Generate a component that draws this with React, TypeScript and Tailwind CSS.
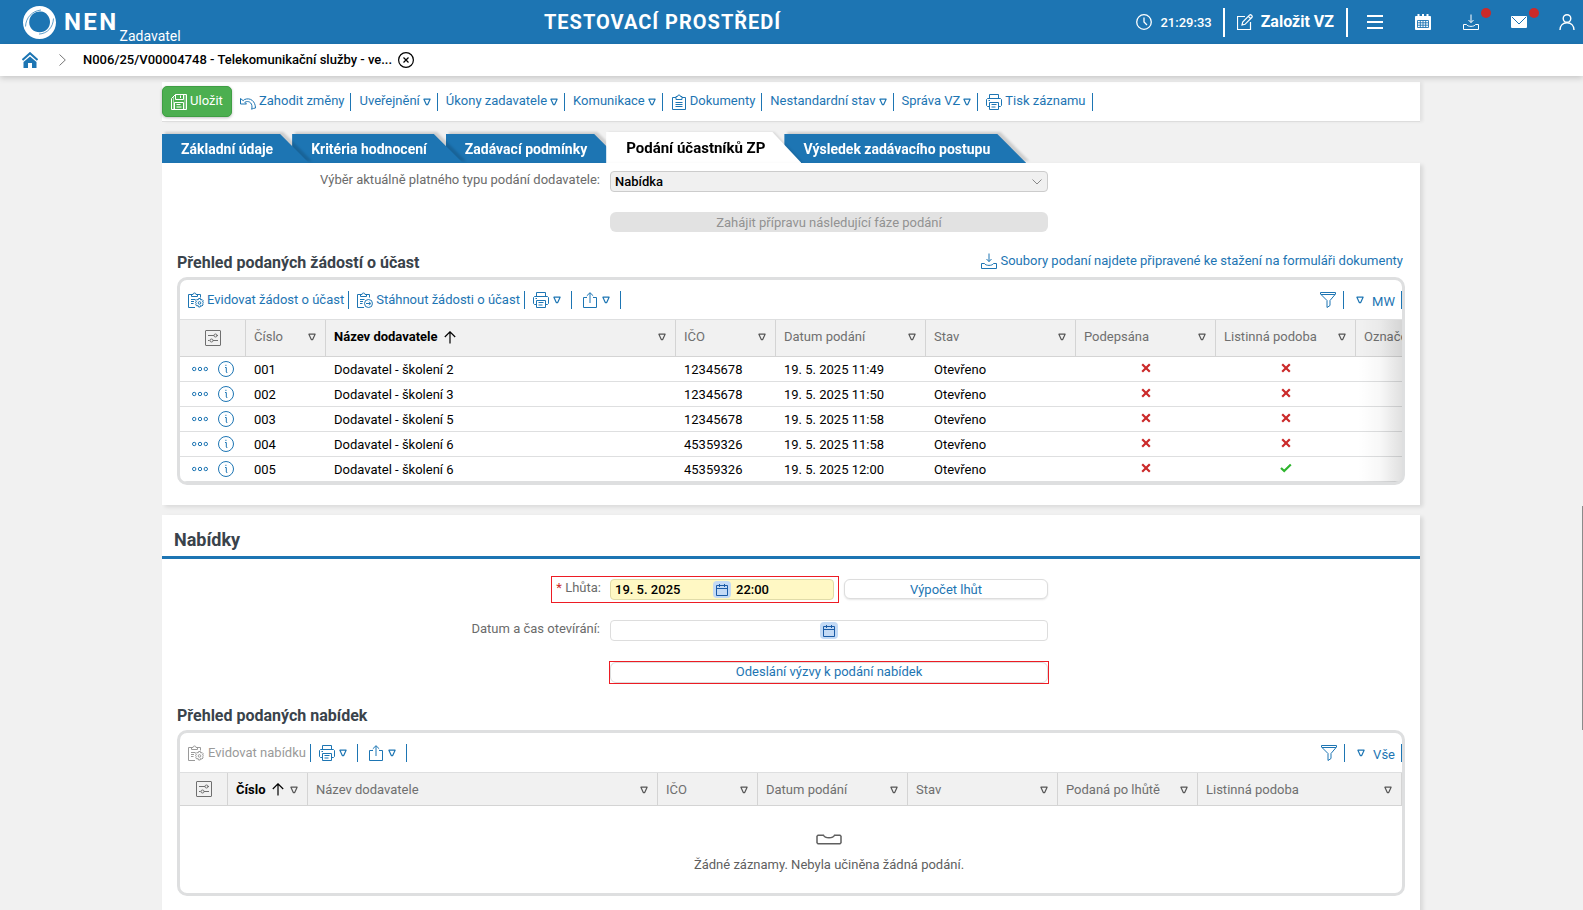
import { useState } from 'react'
import type { ReactNode } from 'react'

/* ================= ICONS ================= */

interface IconProps {
  children: ReactNode
  className?: string
  width?: number
}

const Icon = ({ children, className = '', width = 1 }: IconProps) => (
  <svg
    viewBox="0 0 16 16"
    fill="none"
    stroke="currentColor"
    strokeWidth={width}
    className={`w-4 h-4 shrink-0 ${className}`}
    aria-hidden="true"
  >
    {children}
  </svg>
)

const Triangle = ({ className = '' }: { className?: string }) => (
  <svg viewBox="0 0 8 8" fill="none" stroke="currentColor" strokeWidth="1.2" className={`w-2 h-2 shrink-0 ${className}`} aria-hidden="true">
    <path d="M.9 1.2h6.2L4.7 6.6H3.3z" strokeLinejoin="round" />
  </svg>
)

const SaveIcon = () => (
  <Icon>
    <path d="M4.5.5h11v15H.5v-11zM4.5.5v5h8v-5M9.5 1.5v2.5M3.5 15.5v-7h9v7M5.5 10.5h4M5.5 13h5" />
    <path d="M2.5 3v12.500M14 1v14.500" strokeOpacity=".5" />
  </Icon>
)

const UndoIcon = () => (
  <Icon className="mt-1">
    <path d="M.5 2.500v5.500h6L4.800 6.300c3.700-2 7.200.2 7.200 4.700 0 .8-.2 1.500-.5 2.200 1.600-.6 2.700-1.200 4-1.200C15.400 5.500 10.500 1 4.300 3.600L3.200 4.700.5 2.500z" strokeLinejoin="round" />
  </Icon>
)

const ClipboardIcon = () => (
  <Icon>
    <path d="M5 3.500H1.500v12h13v-12H11M5 5.500v-3h1.500a1.500 1.500 0 0 1 3 0H11v3zM4.500 8.500h7M4.500 10.500h7M4.500 12.500h7" />
  </Icon>
)

const ClipboardGearIcon = () => (
  <Icon>
    <path d="M4 2.500H.5v13h6.500M9 2.500h3.500v3M3.500 4.500v-2h1.500a1.500 1.500 0 0 1 3 0H9.500v2zM3 7.500h4.500M3 9.500h3M3 11.500h2.500" />
    <path d="M10.600 6.500h1.800l.4 1.500 1.300-.5 1.200 1.300-.8 1.200 1 .8-1 .9.600 1.200-1.200 1.200-1.300-.6-.4 1.500h-1.700l-.4-1.500-1.300.5-1.100-1.200.7-1.200-1-.9 1-.8-.7-1.200 1.200-1.300 1.200.6z" />
    <circle cx="11.500" cy="10.900" r="1.300" />
  </Icon>
)

const ClipboardArrowIcon = () => (
  <Icon>
    <path d="M4 2.500H.5v13h6.500M9 2.500h3.500v3M3.500 4.500v-2h1.500a1.500 1.500 0 0 1 3 0H9.500v2zM3 7.500h4.500M3 9.500h3M3 11.500h2.500" />
    <circle cx="11.500" cy="11.500" r="4" />
    <path d="M9 11.500h4.500M12 9.700l1.700 1.800-1.700 1.800" />
  </Icon>
)

const PrinterIcon = () => (
  <Icon>
    <path d="M3.500 4.500v-4h9v4M3.500 12.500h-2l-1-1v-6l1-1h13l1 1v6l-1 1h-2M3.500 8.500h9v7h-9zM5.500 10.500h5M5.500 13h4M2.500 6.500h1.500" />
  </Icon>
)

const ShareIcon = () => (
  <Icon>
    <path d="M5 5.500H1.500v10h13v-10H11M8 11V.9M4.800 3.800L8 .7l3.200 3.100" />
  </Icon>
)

const FunnelIcon = () => (
  <Icon>
    <path d="M.5.500h15v1.500l-5.500 6.500v5l-3 2v-7L.5 2zM1 2.500h14" />
  </Icon>
)

const DownloadIcon = () => (
  <Icon>
    <path d="M8 .5v8M5.500 6L8 8.600 10.500 6M3.500 10.500H.500v5h15v-5h-3c-1 2.500-8 2.500-9 0z" strokeLinejoin="round" />
  </Icon>
)

const SettingsIcon = () => (
  <Icon>
    <rect x=".5" y=".5" width="15" height="15" rx=".5" />
    <path d="M3 5.500h6M11.500 5.500H13M3 10.500h1.500M8 10.500h5" />
    <circle cx="10.500" cy="5.500" r="1.500" />
    <circle cx="6.500" cy="10.500" r="1.500" />
  </Icon>
)

const ArrowUpIcon = () => (
  <svg viewBox="0 0 12 13" fill="none" stroke="currentColor" strokeWidth="1.2" className="w-3 h-[13px] shrink-0" aria-hidden="true">
    <path d="M6 12.500V.800M.8 6L6 .800 11.200 6" />
  </svg>
)

const CalendarIcon = () => (
  <svg viewBox="0 0 12 12" fill="none" stroke="currentColor" className="w-3 h-3" aria-hidden="true">
    <path d="M.5 1.500h11v10H.5zM.5 4.500h11M3.500 0v3M8.500 0v3" />
  </svg>
)

const No = () => (
  <svg viewBox="0 0 10 10" stroke="#cb2a2a" strokeWidth="2.200" className="w-2.5 h-2.5 mx-auto -mt-1" role="img" aria-label="Ne">
    <path d="M1.200 1.200l7.600 7.600M8.800 1.200L1.200 8.800" />
  </svg>
)

const Yes = () => (
  <svg viewBox="0 0 12 10" fill="none" stroke="#2fb52f" strokeWidth="2.200" className="w-3 h-2.5 mx-auto -mt-1" role="img" aria-label="Ano">
    <path d="M1 5l3.200 3L10.800 1.500" />
  </svg>
)

/* ================= DATA ================= */

const menu = [
  { label: 'Uveřejnění', arrow: true },
  { label: 'Úkony zadavatele', arrow: true },
  { label: 'Komunikace', arrow: true },
  { label: 'Dokumenty', icon: <ClipboardIcon /> },
  { label: 'Nestandardní stav', arrow: true },
  { label: 'Správa VZ', arrow: true },
  { label: 'Tisk záznamu', icon: <PrinterIcon /> },
]

const tabs = [
  'Základní údaje',
  'Kritéria hodnocení',
  'Zadávací podmínky',
  'Podání účastníků ZP',
  'Výsledek zadávacího postupu',
]

const requests = [
  { no: '001', name: 'Dodavatel - školení 2', ico: '12345678', date: '19. 5. 2025 11:49', paper: false },
  { no: '002', name: 'Dodavatel - školení 3', ico: '12345678', date: '19. 5. 2025 11:50', paper: false },
  { no: '003', name: 'Dodavatel - školení 5', ico: '12345678', date: '19. 5. 2025 11:58', paper: false },
  { no: '004', name: 'Dodavatel - školení 6', ico: '45359326', date: '19. 5. 2025 11:58', paper: false },
  { no: '005', name: 'Dodavatel - školení 6', ico: '45359326', date: '19. 5. 2025 12:00', paper: true },
]

/* ================= SHARED PARTS ================= */

const Separator = () => <span className="w-px h-[18px] bg-[#1d75b3] shrink-0" />

const ColumnHead = ({ label, sorted }: { label: string; sorted?: boolean }) => (
  <th
    scope="col"
    className={`pl-2 pr-[9px] border-r border-b border-[#d4d4d4] text-left overflow-hidden ${
      sorted ? 'font-bold text-black' : 'font-normal text-[#6f6f6f]'
    }`}
  >
    <span className="flex items-center gap-1.5 whitespace-nowrap">
      {label}
      {sorted && <ArrowUpIcon />}
      <Triangle className="ml-auto text-[#555]" />
    </span>
  </th>
)

const SettingsHead = () => (
  <th scope="col" className="border-r border-b border-[#d4d4d4] text-[#6f6f6f]">
    <button aria-label="Nastavení sloupců" className="flex mx-auto"><SettingsIcon /></button>
  </th>
)

const GridToolbar = ({ children, view }: { children: ReactNode; view: string }) => (
  <div className="h-[39px] pl-2 flex items-center text-[#1d75b3]">
    {children}
    <Separator />
    <button aria-label="Tisk" className="flex items-center gap-1 pl-2 pr-2.5"><PrinterIcon /><Triangle /></button>
    <Separator />
    <button aria-label="Export" className="flex items-center gap-1 pl-2.5 pr-2.5"><ShareIcon /><Triangle /></button>
    <Separator />
    <button aria-label="Filtr" className="ml-auto mr-[7px]"><FunnelIcon /></button>
    <Separator />
    <button className="flex items-center gap-2 pl-3 pr-1.5">
      <Triangle />
      <span className="pt-1">{view}</span>
    </button>
    <Separator />
  </div>
)

const FormRow = ({ label, htmlFor, children }: { label?: string; htmlFor?: string; children: ReactNode }) => (
  <div className="flex items-start">
    <div className="w-[438px] mr-[10px] text-right leading-[17px] text-[#6b6b6b]">
      {label && <label htmlFor={htmlFor}>{label}</label>}
    </div>
    <div className="w-[438px]">{children}</div>
  </div>
)

/* ================= HEADER ================= */

function Header() {
  return (
    <header className="h-11 bg-[#1d75b3] text-white flex items-center justify-between pl-[23px]">
      <a href="#" className="flex items-center h-full">
        <svg viewBox="0 0 33 33" className="w-[33px] h-[33px] mr-2" aria-hidden="true">
          <path
            fill="#fff"
            fillRule="evenodd"
            d="M16.500 0C25.600 0 33 7.400 33 16.500S25.600 33 16.500 33 0 25.600 0 16.500 7.400 0 16.500 0zM18 5.500A10.600 10.600 0 0 0 6.200 16.500c0 5.500 4.600 9.800 10.400 9.800 6.200 0 10.400-4.600 10.400-10.200S23.200 6 18 5.500z"
          />
          <path d="M2.500 20.500C3 11.500 9 5 18 4M30.500 12.500c-.5 9-6 15-14.500 15.600" fill="none" stroke="#1d75b3" strokeWidth=".7" />
        </svg>
        <span className="text-[24px] font-bold tracking-widest">NEN</span>
        <span className="text-[14px] self-end ml-px">Zadavatel</span>
      </a>

      <div className="pl-2 text-[20px] font-bold tracking-wider">TESTOVACÍ PROSTŘEDÍ</div>

      <div className="flex items-center">
        <Icon className="mr-2" width={1.3}>
          <circle cx="8" cy="8" r="7.300" />
          <path d="M8 3.500V8l3 3" />
        </Icon>
        <time className="mr-[11px] pt-0.5 font-medium">21:29:33</time>
        <span className="w-0.5 h-[29px] bg-white" />
        <button className="flex items-center gap-2 px-3 text-[16px] font-bold">
          <Icon width={1.2}>
            <path d="M8 2.500H.500v13h13V8M5 11l.700-3L12.500 1.200c1.300-1.300 3.600 1 2.300 2.300L8 10.300zM11.500 2.500l2 2" />
          </Icon>
          Založit VZ
        </button>
        <span className="w-0.5 h-[29px] bg-white" />
        <div className="flex items-center gap-8 pl-[19px] pr-2">
          <button aria-label="Menu">
            <Icon width={2} className="block"><path d="M0 2h16M0 8h16M0 14h16" /></Icon>
          </button>
          <button aria-label="Kalendář">
            <Icon className="block">
              <path d="M.5 2.500h15v13H.5z" fill="currentColor" />
              <path d="M3.500 0v3M8 0v3M12.500 0v3" strokeWidth="2" />
              <path d="M2.500 6.500h11v7h-11zM2.500 8.800h11M2.500 11.200h11M5.300 6.500v7M8 6.500v7M10.700 6.500v7" stroke="#1d75b3" strokeWidth=".9" />
            </Icon>
          </button>
          <button aria-label="Ke stažení" className="relative">
            <DownloadIcon />
            <span className="absolute -top-1.5 -right-3 w-2.5 h-2.5 rounded-full bg-[#cb2a2a]" />
          </button>
          <button aria-label="Zprávy" className="relative">
            <Icon className="block">
              <rect x="0" y="2" width="16" height="12" rx="1" fill="currentColor" stroke="none" />
              <path d="M1 3l7 7 7-7" stroke="#1d75b3" />
            </Icon>
            <span className="absolute -top-1.5 -right-3 w-2.5 h-2.5 rounded-full bg-[#cb2a2a]" />
          </button>
          <button aria-label="Uživatel">
            <Icon width={1.4} className="block">
              <circle cx="8" cy="4.500" r="3.800" />
              <path d="M1 16c0-4.500 3-7.300 7-7.300s7 2.800 7 7.300" />
            </Icon>
          </button>
        </div>
      </div>
    </header>
  )
}

/* ================= PAGE ================= */

export default function App() {
  const [active, setActive] = useState(3)

  return (
    <div className="relative min-h-screen bg-[#f1f1f1] font-[Roboto,sans-serif] text-[13px] leading-4 text-black">
      <Header />

      {/* BREADCRUMB */}
      <nav className="relative z-10 h-8 bg-white shadow-[0_2px_6px_rgba(0,0,0,0.18)] flex items-center pl-[22px]">
        <a href="#" aria-label="Domů" className="text-[#1d75b3] mr-[21px]">
          <Icon>
            <path d="M.5 8L8 1.200 15.500 8" strokeWidth="2" />
            <path d="M8 4.500L14.500 10v6H10v-5H6v5H1.500v-6z" fill="currentColor" stroke="none" />
          </Icon>
        </a>
        <svg viewBox="0 0 7 12" fill="none" stroke="#777" className="w-[7px] h-3 mr-[17px]" aria-hidden="true">
          <path d="M.5.500L6.300 6 .5 11.500" />
        </svg>
        <span className="font-medium">N006/25/V00004748 - Telekomunikační služby - ve...</span>
        <button aria-label="Zavřít" className="ml-1.5">
          <Icon width={1.2}>
            <circle cx="8" cy="8" r="7.400" />
            <path d="M5.500 5.500l5 5M10.500 5.500l-5 5" />
          </Icon>
        </button>
      </nav>

      <main className="pl-[162px] pr-[163px] pt-1.5">
        {/* RECORD ACTIONS */}
        <div className="h-10 bg-white border-b border-[#ddd] shadow-[3px_0_3px_rgba(0,0,0,0.06)] flex items-center text-[#1d75b3]">
          <button className="h-[31px] w-[70px] flex items-center justify-center gap-[3px] rounded-[5px] border border-[#3f9e44] bg-[#4caf50] text-white shadow-[0_1px_3px_rgba(0,0,0,0.25)]">
            <SaveIcon />
            <span className="pb-0.5">Uložit</span>
          </button>
          <button className="flex items-center gap-[3px] pl-2 pr-1.5">
            <UndoIcon />
            <span className="pb-0.5">Zahodit změny</span>
          </button>
          <Separator />
          {menu.map((item) => (
            <div key={item.label} className="flex items-center">
              <button className="flex items-center gap-[3px] pl-2 pr-1.5">
                {item.icon}
                <span className="pb-0.5">{item.label}</span>
                {item.arrow && <Triangle />}
              </button>
              <Separator />
            </div>
          ))}
        </div>

        {/* TABS */}
        <div role="tablist" className="flex items-end h-[41px]">
          {tabs.map((tab, i) => (
            <div
              key={tab}
              className={`-mr-[17px] ${
                active === i
                  ? 'drop-shadow-[2px_0_1px_rgba(0,0,0,0.1)]'
                  : 'drop-shadow-[3px_-2px_1px_rgba(0,0,0,0.15)]'
              }`}
              style={{ zIndex: active === i ? 10 : tabs.length - i }}
            >
              <button
                role="tab"
                aria-selected={active === i}
                onClick={() => setActive(i)}
                className={`block pr-9 font-bold [clip-path:polygon(0_0,calc(100%-29px)_0,100%_100%,0_100%)] ${
                  active === i ? 'h-[31px] pl-5 bg-white text-black text-[15px]' : 'h-[29px] pl-[19px] bg-[#1d75b3] text-white text-[14px]'
                }`}
              >
                {tab}
              </button>
            </div>
          ))}
        </div>

        {/* REQUESTS */}
        <section className="relative z-10 bg-white shadow-[3px_2px_4px_rgba(0,0,0,0.1)] px-[15px] pt-2 pb-5">
          <div className="-ml-[15px] flex flex-col gap-5">
            <FormRow label="Výběr aktuálně platného typu podání dodavatele:" htmlFor="submission-type">
              <div className="relative">
                <select id="submission-type" className="block w-full h-[21px] appearance-none rounded-[4px] border border-[#ccc] bg-[#f0f0f0] px-1 font-medium">
                  <option>Nabídka</option>
                </select>
                <svg viewBox="0 0 10 6" fill="none" stroke="#888" className="absolute right-1.5 top-2 w-2.5 h-1.5" aria-hidden="true">
                  <path d="M.5.500L5 5 9.500.500" />
                </svg>
              </div>
            </FormRow>
            <FormRow>
              <button disabled className="block w-full h-5 pt-0.5 rounded-md bg-[#e2e2e2] text-[#929292]">
                Zahájit přípravu následující fáze podání
              </button>
            </FormRow>
          </div>

          <div className="mt-5 mb-1 flex justify-between items-start">
            <h2 className="pt-px text-[16px] leading-5 font-bold text-[#3a434b]">Přehled podaných žádostí o účast</h2>
            <a href="#" className="flex items-center gap-[3px] h-[18px] mr-0.5 text-[#1d75b3]"><DownloadIcon />Soubory podaní najdete připravené ke stažení na formuláři dokumenty</a>
          </div>

          <div className="relative overflow-hidden rounded-[10px] border-[3px] border-[#dedfe0]">
            <GridToolbar view="MW">
              <button className="flex items-center gap-[3px] pr-1"><ClipboardGearIcon />Evidovat žádost o účast</button>
              <Separator />
              <button className="flex items-center gap-[3px] pl-2 pr-1"><ClipboardArrowIcon />Stáhnout žádosti o účast</button>
            </GridToolbar>
            <div className="overflow-hidden border-t border-[#dedfe0]">
              <table className="table-fixed w-[1316px] border-separate border-spacing-0">
                <colgroup>
                  <col className="w-[66px]" />
                  <col className="w-20" />
                  <col className="w-[350px]" />
                  <col className="w-[100px]" />
                  <col className="w-[150px]" />
                  <col className="w-[150px]" />
                  <col className="w-[140px]" />
                  <col className="w-[140px]" />
                  <col className="w-[140px]" />
                </colgroup>
                <thead className="[&_th>span]:pb-0.5">
                  <tr className="h-[37px] bg-[#f1f1f1]">
                    <SettingsHead />
                    <ColumnHead label="Číslo" />
                    <ColumnHead label="Název dodavatele" sorted />
                    <ColumnHead label="IČO" />
                    <ColumnHead label="Datum podání" />
                    <ColumnHead label="Stav" />
                    <ColumnHead label="Podepsána" />
                    <ColumnHead label="Listinná podoba" />
                    <ColumnHead label="Označení" />
                  </tr>
                </thead>
                <tbody className="[&_td]:border-b [&_td]:border-[#dedfe0] [&_td]:px-2 [&_td]:pb-0 [&_td]:pt-0.5">
                  {requests.map((row) => (
                    <tr key={row.no} className="h-[25px]">
                      <td>
                        <span className="flex items-center gap-2.5 pl-1 pb-0.5 text-[#1d75b3]">
                          <button aria-label="Akce">
                            <Icon className="block">
                              <circle cx="2.200" cy="8" r="1.700" />
                              <circle cx="8" cy="8" r="1.700" />
                              <circle cx="13.800" cy="8" r="1.700" />
                            </Icon>
                          </button>
                          <button aria-label="Detail">
                            <Icon className="block">
                              <circle cx="8" cy="8" r="7.500" />
                              <path d="M7 6.500h1.300v4.500c0 .5.300.700 1 .5M7.300 4.300h1.200" />
                            </Icon>
                          </button>
                        </span>
                      </td>
                      <td>{row.no}</td>
                      <td>{row.name}</td>
                      <td>{row.ico}</td>
                      <td>{row.date}</td>
                      <td>Otevřeno</td>
                      <td><No /></td>
                      <td>{row.paper ? <Yes /> : <No />}</td>
                      <td />
                    </tr>
                  ))}
                </tbody>
              </table>
            </div>
            <div className="absolute right-0 top-10 bottom-0 w-11 pointer-events-none bg-gradient-to-r from-transparent via-black/[0.03] to-black/[0.12]" />
          </div>
        </section>

        {/* OFFERS */}
        <section className="mt-2.5 bg-white shadow-[3px_2px_4px_rgba(0,0,0,0.1)] pb-5">
          <h1 className="px-3 pt-[13px] pb-1 text-[18px] leading-6 font-bold text-[#3a434b] border-b-[3px] border-[#1d75b3]">Nabídky</h1>

          <div className="flex flex-col pt-[17px] gap-[17px]">
            <div className="flex items-start">
              <div className="ml-[389px] h-[27px] border border-[#ed1c24] flex items-start pt-0.5 pr-1">
                <label htmlFor="deadline-date" className="w-[49px] mr-[9px] text-right leading-[17px] text-[#6b6b6b]">
                  <span className="text-[#cb2a2a]">*</span> Lhůta:
                </label>
                <div className="w-[224px] h-[21px] flex items-center rounded-[4px] border border-[#e0dba8] bg-[#fff8c4] pl-1">
                  <input id="deadline-date" defaultValue="19. 5. 2025" className="w-[98px] bg-transparent outline-none font-medium" />
                  <button aria-label="Vybrat datum" className="w-[18px] h-[17px] flex items-center justify-center rounded-[4px] bg-[#c3daf5] text-[#1a5ba6]"><CalendarIcon /></button>
                  <input aria-label="Čas" defaultValue="22:00" className="w-20 ml-[5px] bg-transparent outline-none font-medium" />
                </div>
              </div>
              <button className="ml-[5px] mt-[3px] w-[204px] h-5 rounded-md border border-[#ddd] bg-white text-[#1d75b3] leading-none shadow-[0_1px_2px_rgba(0,0,0,0.1)]">
                Výpočet lhůt
              </button>
            </div>

            <FormRow label="Datum a čas otevírání:" htmlFor="opening-date">
              <div className="h-[21px] flex items-center rounded-[4px] border border-[#ddd] bg-white pl-1">
                <input id="opening-date" className="w-[205px] bg-transparent outline-none font-medium" />
                <button aria-label="Vybrat datum otevírání" className="w-[18px] h-[17px] flex items-center justify-center rounded-[4px] bg-[#c3daf5] text-[#1a5ba6]"><CalendarIcon /></button>
                <input aria-label="Čas otevírání" className="w-[180px] ml-[5px] bg-transparent outline-none font-medium" />
              </div>
            </FormRow>

            <div className="mt-[3px] ml-[447px] w-[440px] border border-[#ed1c24]">
              <button className="block w-full h-[21px] pb-0.5 rounded-md border border-[#ddd] bg-white text-[#1d75b3] leading-none">
                Odeslání výzvy k podání nabídek
              </button>
            </div>
          </div>

          <div className="px-[15px]">
            <h2 className="mt-[22px] mb-1 text-[16px] leading-5 font-bold text-[#3a434b]">Přehled podaných nabídek</h2>
            <div className="overflow-hidden rounded-[10px] border-[3px] border-[#dedfe0]">
              <GridToolbar view="Vše">
                <button disabled className="flex items-center gap-1 pr-1 text-[#9a9a9a]"><ClipboardGearIcon />Evidovat nabídku</button>
              </GridToolbar>
              <table className="table-fixed w-full border-separate border-spacing-0 border-t border-[#dedfe0]">
                <colgroup>
                  <col className="w-12" />
                  <col className="w-20" />
                  <col className="w-[350px]" />
                  <col className="w-[100px]" />
                  <col className="w-[150px]" />
                  <col className="w-[150px]" />
                  <col className="w-[140px]" />
                  <col />
                </colgroup>
                <thead className="[&_th>span]:pt-px">
                  <tr className="h-[33px] bg-[#f1f1f1]">
                    <SettingsHead />
                    <ColumnHead label="Číslo" sorted />
                    <ColumnHead label="Název dodavatele" />
                    <ColumnHead label="IČO" />
                    <ColumnHead label="Datum podání" />
                    <ColumnHead label="Stav" />
                    <ColumnHead label="Podaná po lhůtě" />
                    <ColumnHead label="Listinná podoba" />
                  </tr>
                </thead>
              </table>
              <div className="pl-[76px] pt-7 pb-5 flex flex-col items-center text-[#5f5f5f]">
                <svg viewBox="0 0 26 11" fill="none" stroke="currentColor" strokeWidth="1.500" className="w-[26px] h-[11px] mb-3" aria-hidden="true">
                  <path d="M2 1.200h5.500c1.500 3.300 9.500 3.300 11 0H24l1 1v6.500l-1 1H2l-1-1V2.200z" />
                </svg>
                Žádné záznamy. Nebyla učiněna žádná podání.
              </div>
            </div>
          </div>
        </section>
      </main>

      {/* SCROLL THUMB */}
      <div className="absolute right-0 top-[506px] w-px h-56 bg-[#8b8b8b]" />
    </div>
  )
}
